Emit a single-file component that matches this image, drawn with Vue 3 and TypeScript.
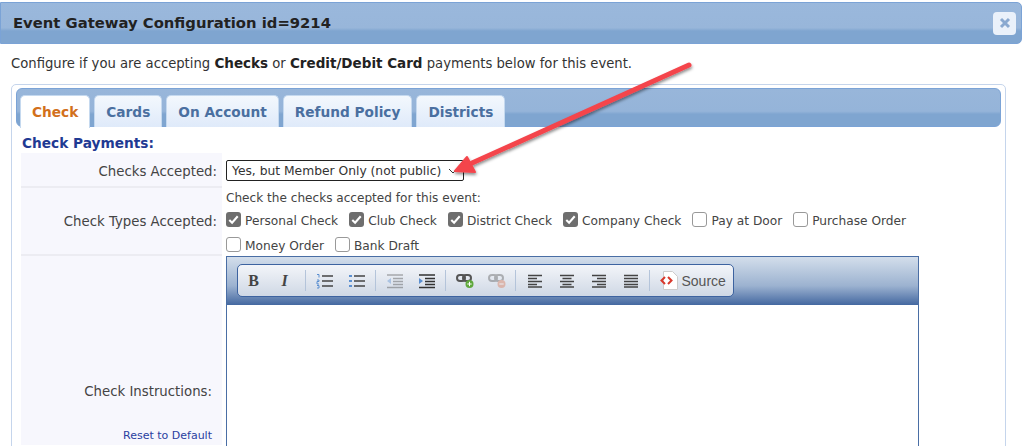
<script setup lang="ts">
const tabs = ['Check', 'Cards', 'On Account', 'Refund Policy', 'Districts']

const checkRows = [
  [
    { label: 'Personal Check', on: true },
    { label: 'Club Check', on: true },
    { label: 'District Check', on: true },
    { label: 'Company Check', on: true },
    { label: 'Pay at Door', on: false },
    { label: 'Purchase Order', on: false },
  ],
  [
    { label: 'Money Order', on: false },
    { label: 'Bank Draft', on: false },
  ],
]

const alignButtons = ['left', 'center', 'right', 'full']
</script>

<template>
  <div class="page">
    <header class="titlebar">
      <span class="title">Event Gateway Configuration id=9214</span>
      <button class="close" aria-label="Close">
        <svg width="12" height="12" viewBox="0 0 12 12">
          <path d="M2 2l8 8M10 2l-8 8" stroke="#8aa9d0" stroke-width="3" />
        </svg>
      </button>
    </header>

    <p class="intro">
      Configure if you are accepting <b>Checks</b> or <b>Credit/Debit Card</b> payments below for this event.
    </p>

    <section class="panel">
      <nav class="tabbar">
        <span v-for="(t, i) in tabs" :key="t" class="tab" :class="{ active: i === 0 }">{{ t }}</span>
      </nav>

      <h3 class="heading">Check Payments:</h3>

      <div class="form">
        <div class="label row1">Checks Accepted:</div>
        <div class="field row1">
          <div class="select">
            <span>Yes, but Member Only (not public)</span>
            <svg width="10" height="6" viewBox="0 0 10 6"><path d="M1 1l4 4 4-4" fill="none" stroke="#333" /></svg>
          </div>
        </div>

        <div class="label row2">Check Types Accepted:</div>
        <div class="field row2">
          <div class="hint">Check the checks accepted for this event:</div>
          <div v-for="(row, r) in checkRows" :key="r" class="checks">
            <label v-for="c in row" :key="c.label" class="check">
              <span class="box" :class="{ on: c.on }">
                <svg v-if="c.on" width="15" height="15" viewBox="0 0 16 16">
                  <path d="M3.500 8.500l3 3 6-7" fill="none" stroke="#fff" stroke-width="2.200" />
                </svg>
              </span>
              {{ c.label }}
            </label>
          </div>
        </div>

        <div class="label row3">
          <span class="instr">Check Instructions:</span>
          <a class="reset">Reset to Default</a>
        </div>
        <div class="field row3">
          <div class="editor">
            <div class="toolbar">
              <div class="group">
                <span class="btn glyph b">B</span>
                <span class="btn glyph i">I</span>
                <span class="sep"></span>
                <span class="btn">
                  <svg width="18" height="16" viewBox="0 0 18 16">
                    <path d="M1 1.500h2v3M1 7h2v1.500H1V11h2M1 12.500h2v2.500H1" fill="none" stroke="#5b8fd0" />
                    <path d="M6 3h11M6 8h11M6 13h11" stroke="#444" stroke-width="1.500" />
                  </svg>
                </span>
                <span class="btn">
                  <svg width="18" height="16" viewBox="0 0 18 16">
                    <path d="M1 2h3v2H1zM1 7h3v2H1zM1 12h3v2H1z" fill="#5b8fd0" />
                    <path d="M6 3h11M6 8h11M6 13h11" stroke="#444" stroke-width="1.500" />
                  </svg>
                </span>
                <span class="sep"></span>
                <span class="btn faded">
                  <svg width="18" height="16" viewBox="0 0 18 16">
                    <path d="M1 2h16M7 5.500h10M7 8.500h10M7 11.500h10M1 14.500h16" stroke="#444" stroke-width="1.500" />
                    <path d="M5 5v6L1 8z" fill="#5b8fd0" />
                  </svg>
                </span>
                <span class="btn">
                  <svg width="18" height="16" viewBox="0 0 18 16">
                    <path d="M1 2h16M7 5.500h10M7 8.500h10M7 11.500h10M1 14.500h16" stroke="#333" stroke-width="1.500" />
                    <path d="M1 5v6l4-3z" fill="#5b8fd0" />
                  </svg>
                </span>
                <span class="sep"></span>
                <span class="btn">
                  <svg width="18" height="16" viewBox="0 0 18 16">
                    <rect x="1" y="2" width="8" height="6" rx="3" fill="none" stroke="#555" stroke-width="2" />
                    <rect x="7" y="2" width="8" height="6" rx="3" fill="none" stroke="#555" stroke-width="2" />
                    <circle cx="13.500" cy="11" r="4" fill="#5fa83c" />
                    <path d="M13.500 8.800v4.400M11.300 11h4.400" stroke="#fff" />
                  </svg>
                </span>
                <span class="btn faded">
                  <svg width="18" height="16" viewBox="0 0 18 16">
                    <rect x="1" y="2" width="8" height="6" rx="3" fill="none" stroke="#555" stroke-width="2" />
                    <rect x="7" y="2" width="8" height="6" rx="3" fill="none" stroke="#555" stroke-width="2" />
                    <circle cx="13.500" cy="11" r="4" fill="#d9734e" />
                    <path d="M11.300 11h4.400" stroke="#fff" />
                  </svg>
                </span>
                <span class="sep"></span>
                <span v-for="a in alignButtons" :key="a" class="btn">
                  <svg width="16" height="14" viewBox="0 0 16 14">
                    <path v-if="a === 'left'" d="M1 1.500h14M1 4.500h9M1 7.500h14M1 10.500h9M1 13h14" stroke="#444" stroke-width="1.400" />
                    <path v-else-if="a === 'center'" d="M1 1.500h14M3.500 4.500h9M1 7.500h14M3.500 10.500h9M1 13h14" stroke="#444" stroke-width="1.400" />
                    <path v-else-if="a === 'right'" d="M1 1.500h14M6 4.500h9M1 7.500h14M6 10.500h9M1 13h14" stroke="#444" stroke-width="1.400" />
                    <path v-else d="M1 1.500h14M1 4.500h14M1 7.500h14M1 10.500h14M1 13h14" stroke="#444" stroke-width="1.400" />
                  </svg>
                </span>
                <span class="sep"></span>
                <span class="source">
                  <svg width="18" height="19" viewBox="0 0 18 19">
                    <path d="M3.500.5h9l5 5v13h-14z" fill="#fff" stroke="#ccc" />
                    <path d="M5 6l-3.500 3.500L5 13M8 6l3.500 3.500L8 13" fill="none" stroke="#d8382c" stroke-width="2" />
                  </svg>
                  Source
                </span>
              </div>
            </div>
            <div class="editarea"></div>
          </div>
        </div>
      </div>
    </section>

    <svg class="arrow" width="1024" height="446" viewBox="0 0 1024 446">
      <defs>
        <filter id="arrow-shadow" x="-10%" y="-10%" width="120%" height="130%">
          <feDropShadow dx="0.500" dy="2" stdDeviation="1.500" flood-color="#000" flood-opacity="0.45" />
        </filter>
      </defs>
      <g filter="url(#arrow-shadow)">
        <path d="M689 65L472 163" stroke="#f4444c" stroke-width="5" stroke-linecap="round" />
        <path d="M455 171L467 157 475 172z" fill="#f4444c" stroke="#f4444c" stroke-width="2" stroke-linejoin="round" />
      </g>
    </svg>
  </div>
</template>

<style scoped>
.page {
  position: relative;
  width: 1024px;
  height: 446px;
  overflow: hidden;
  background: #fff;
  font-family: Tahoma, "DejaVu Sans", sans-serif;
  font-size: 13.300px;
  color: #333;
}

.titlebar {
  display: flex;
  align-items: center;
  justify-content: space-between;
  box-sizing: border-box;
  width: 1022px;
  height: 42px;
  margin-top: 2px;
  padding: 0 5px 0 12px;
  border: 1px solid #7ba3d6;
  border-radius: 0 5px 5px 0;
  background: linear-gradient(#9ab8dc 0, #98b6da 62%, #7fa5d0 70%, #7fa5d0 100%);
}

.title {
  margin-top: -2px;
  font-size: 14.800px;
  font-weight: 700;
  color: #222;
}

.close {
  display: flex;
  align-items: center;
  justify-content: center;
  width: 23px;
  height: 23px;
  padding: 0;
  border: 0;
  border-radius: 4px;
  background: #eaf1fa;
}

.intro {
  margin: 11px 0 0 11px;
  line-height: 17px;
  font-size: 13.200px;
  color: #333;
}
.intro b {
  font-size: 13.500px;
  color: #222;
}

.panel {
  box-sizing: border-box;
  width: 995px;
  height: 400px;
  margin: 12px 0 0 11px;
  padding: 3px 4px;
  border: 1px solid #c5d5ec;
  border-radius: 5px 5px 0 0;
}

.tabbar {
  display: flex;
  gap: 4px;
  box-sizing: border-box;
  height: 39px;
  padding: 6px 0 0 3px;
  border: 1px solid #7ba3d6;
  border-radius: 6px;
  background: linear-gradient(#98b6da 0, #95b4d9 60%, #7fa5d0 68%, #7fa5d0 100%);
}

.tab {
  display: flex;
  align-items: center;
  justify-content: center;
  box-sizing: border-box;
  height: 32px;
  padding: 0 11px;
  border: 1px solid #c5d9ef;
  border-bottom: 0;
  border-radius: 5px 5px 0 0;
  background: linear-gradient(#f3f8fd, #dfeafa);
  font-size: 13.700px;
  font-weight: 700;
  color: #4a6fa0;
}
.tab.active {
  height: 33px;
  background: #fff;
  color: #d2701c;
}

.heading {
  margin: 8px 0 1px 6px;
  font-size: 13.700px;
  line-height: 17px;
  font-weight: 700;
  color: #1f3a93;
}

.form {
  display: grid;
  grid-template-columns: 201px 1fr;
  grid-template-rows: 35px 68px 189px;
  column-gap: 4px;
  margin: 0 0 0 5px;
}

.label {
  display: flex;
  align-items: center;
  justify-content: flex-end;
  padding-right: 5px;
  background: #f7f7fd;
  color: #444;
  border-bottom: 2px solid #ececf2;
}
.label.row1 { padding-top: 3px; }
.label.row3 {
  position: relative;
  padding-right: 10px;
  border-bottom: 0;
}

.instr { margin-top: 82px; }
.reset {
  position: absolute;
  right: 10px;
  bottom: 3px;
  font-size: 11px;
  color: #2a3fa0;
}

.field { min-width: 0; }
.field.row1 { padding-top: 7px; }

.select {
  display: flex;
  align-items: center;
  justify-content: space-between;
  box-sizing: border-box;
  width: 238px;
  height: 21px;
  padding: 0 5px;
  border: 1px solid #222;
  border-radius: 2px;
  font-size: 12.300px;
  white-space: nowrap;
  color: #333;
}

.hint {
  height: 20px;
  font-size: 12.100px;
  line-height: 20px;
  color: #444;
}

.checks {
  display: flex;
  gap: 11px;
  height: 25px;
  align-items: center;
}

.check {
  display: flex;
  align-items: center;
  gap: 4px;
  font-size: 12.200px;
  color: #444;
}

.box {
  display: flex;
  box-sizing: border-box;
  width: 15px;
  height: 15px;
  border: 1px solid #999;
  border-radius: 3px;
  background: #fff;
  margin-top: -2px;
}
.box.on {
  border: 0;
  background: #6e6e6e;
}

.editor {
  box-sizing: border-box;
  width: 693px;
  height: 200px;
  border: 1px solid #4a6ea5;
}

.toolbar {
  box-sizing: border-box;
  height: 48px;
  padding: 7px 0 0 10px;
  background: linear-gradient(#d3deeb 0, #9cb2d0 60%, #4468a0 100%);
}

.group {
  display: flex;
  align-items: center;
  box-sizing: border-box;
  width: 497px;
  height: 33px;
  border: 1px solid #3d63a0;
  border-radius: 5px;
  background: linear-gradient(#f3f5f9, #cfd8e5);
}

.btn {
  display: flex;
  align-items: center;
  justify-content: center;
  width: 32px;
  height: 100%;
}
.btn.faded { opacity: 0.4; }

.glyph {
  font-family: "Liberation Serif", serif;
  font-size: 16px;
  font-weight: 700;
  color: #444;
  width: 31px;
}
.glyph.i {
  margin-right: 2.500px;
  font-style: italic;
}

.sep {
  width: 1px;
  height: 21px;
  margin: 0 2.500px;
  background: #b4c4da;
}

.source {
  display: flex;
  align-items: center;
  gap: 4px;
  margin-left: 7px;
  font-family: "Liberation Sans", sans-serif;
  font-size: 14px;
  color: #555;
}

.editarea {
  height: 150px;
  background: #fff;
}

.arrow {
  position: absolute;
  top: 0;
  left: 0;
  pointer-events: none;
}
</style>
